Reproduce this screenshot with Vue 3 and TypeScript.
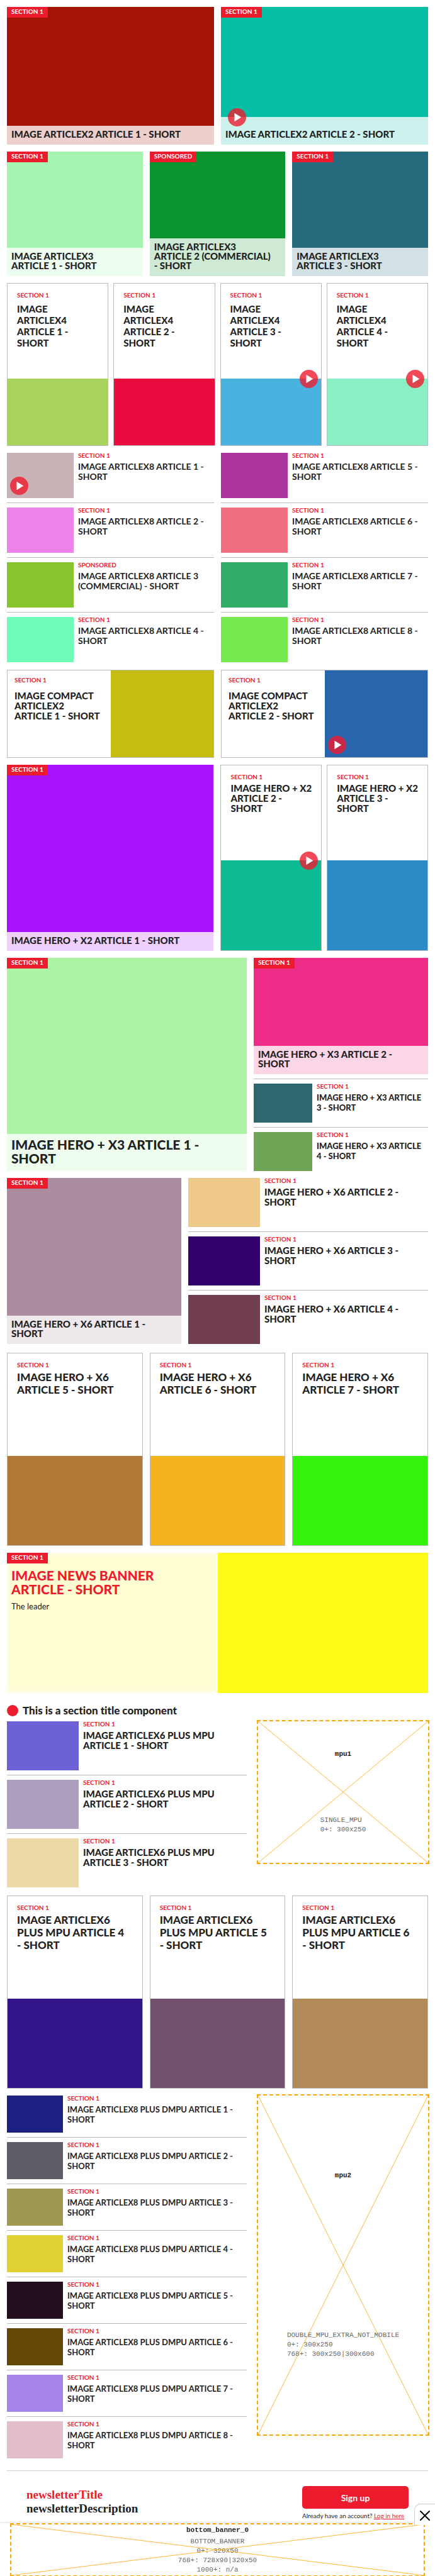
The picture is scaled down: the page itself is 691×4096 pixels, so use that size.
<script setup lang="ts">
interface Article {
  title: string
  color: string
  label?: string
  video?: boolean
}

interface AdSlot {
  kind: 'ad'
  name: string
  size: 'single' | 'double'
  lines: string[]
}

interface ArticleBlock {
  kind: 'overlay' | 'card' | 'compact' | 'banner'
  article: Article
}

interface ListBlock {
  kind: 'list'
  lead?: Article
  articles: Article[]
}

type Block = AdSlot | ArticleBlock | ListBlock

interface Section {
  name: string
  heading?: string
  blocks: Block[]
}

const art = (title: string, color: string, extra: Partial<Article> = {}): Article => ({
  title: `${title} - SHORT`,
  color,
  ...extra,
})

const numbered = (prefix: string, start: number, colors: string[]): Article[] =>
  colors.map((color, i) => art(`${prefix} ARTICLE ${start + i}`, color))

const as = (kind: ArticleBlock['kind'], articles: Article[]): ArticleBlock[] =>
  articles.map((article) => ({ kind, article }))

const sections: Section[] = [
  {
    name: 'x2',
    blocks: as('overlay', [
      art('IMAGE ARTICLEX2 ARTICLE 1', '#a41508'),
      art('IMAGE ARTICLEX2 ARTICLE 2', '#06bda5', { video: true }),
    ]),
  },
  {
    name: 'x3',
    blocks: as('overlay', [
      art('IMAGE ARTICLEX3 ARTICLE 1', '#a6f3b2'),
      art('IMAGE ARTICLEX3 ARTICLE 2 (COMMERCIAL)', '#0c942e', { label: 'SPONSORED' }),
      art('IMAGE ARTICLEX3 ARTICLE 3', '#276a7e'),
    ]),
  },
  {
    name: 'x4',
    blocks: as('card', [
      art('IMAGE ARTICLEX4 ARTICLE 1', '#a8d35d'),
      art('IMAGE ARTICLEX4 ARTICLE 2', '#ea0b3f'),
      art('IMAGE ARTICLEX4 ARTICLE 3', '#4ab2de', { video: true }),
      art('IMAGE ARTICLEX4 ARTICLE 4', '#8aefc4', { video: true }),
    ]),
  },
  {
    name: 'x8',
    blocks: [
      {
        kind: 'list',
        articles: [
          art('IMAGE ARTICLEX8 ARTICLE 1', '#c9b3b6', { video: true }),
          art('IMAGE ARTICLEX8 ARTICLE 2', '#ed82e9'),
          art('IMAGE ARTICLEX8 ARTICLE 3 (COMMERCIAL)', '#87c52f', { label: 'SPONSORED' }),
          art('IMAGE ARTICLEX8 ARTICLE 4', '#6ffeb9'),
        ],
      },
      {
        kind: 'list',
        articles: numbered('IMAGE ARTICLEX8', 5, ['#ac349c', '#f07080', '#32ad68', '#74ea4f']),
      },
    ],
  },
  {
    name: 'compact-x2',
    blocks: as('compact', [
      art('IMAGE COMPACT ARTICLEX2 ARTICLE 1', '#c7bd12'),
      art('IMAGE COMPACT ARTICLEX2 ARTICLE 2', '#2965ad', { video: true }),
    ]),
  },
  {
    name: 'hero-x2',
    blocks: [
      ...as('overlay', [art('IMAGE HERO + X2 ARTICLE 1', '#a813fb')]),
      ...as('card', [
        art('IMAGE HERO + X2 ARTICLE 2', '#0dbb95', { video: true }),
        art('IMAGE HERO + X2 ARTICLE 3', '#2c8bc5'),
      ]),
    ],
  },
  {
    name: 'hero-x3',
    blocks: [
      ...as('overlay', [art('IMAGE HERO + X3 ARTICLE 1', '#acf3a3')]),
      {
        kind: 'list',
        lead: art('IMAGE HERO + X3 ARTICLE 2', '#ee2d89'),
        articles: numbered('IMAGE HERO + X3', 3, ['#2e686f', '#6ea555']),
      },
    ],
  },
  {
    name: 'hero-x6',
    blocks: [
      ...as('overlay', [art('IMAGE HERO + X6 ARTICLE 1', '#ac8c9f')]),
      { kind: 'list', articles: numbered('IMAGE HERO + X6', 2, ['#eec887', '#31026b', '#713e51']) },
    ],
  },
  {
    name: 'cards-x3',
    blocks: as('card', numbered('IMAGE HERO + X6', 5, ['#b17838', '#f4b41f', '#34f209'])),
  },
  {
    name: 'news',
    blocks: [{ kind: 'banner', article: art('IMAGE NEWS BANNER ARTICLE', '#fdfa17') }],
  },
  {
    name: 'mpu',
    heading: 'This is a section title component',
    blocks: [
      {
        kind: 'list',
        articles: numbered('IMAGE ARTICLEX6 PLUS MPU', 1, ['#6d61d6', '#ad9fbf', '#edd9a5']),
      },
      { kind: 'ad', name: 'mpu1', size: 'single', lines: ['SINGLE_MPU', '0+: 300x250'] },
    ],
  },
  {
    name: 'cards-x3',
    blocks: as('card', numbered('IMAGE ARTICLEX6 PLUS MPU', 4, ['#31148a', '#715070', '#b28b58'])),
  },
  {
    name: 'dmpu',
    blocks: [
      {
        kind: 'list',
        articles: numbered('IMAGE ARTICLEX8 PLUS DMPU', 1, [
          '#1e2082', '#605d69', '#a09750', '#e0d234', '#220e1c', '#654803', '#a484e9', '#e3bfcd',
        ]),
      },
      {
        kind: 'ad',
        name: 'mpu2',
        size: 'double',
        lines: ['DOUBLE_MPU_EXTRA_NOT_MOBILE', '0+: 300x250', '768+: 300x250|300x600'],
      },
    ],
  },
]

const bottomBanner = ['BOTTOM_BANNER', '0+: 320x50', '768+: 728x90|320x50', '1000+: n/a']
</script>

<template>
  <div class="page">
    <svg class="sprite" aria-hidden="true">
      <symbol id="play" viewBox="0 0 32 32">
        <circle cx="16" cy="16" r="16" fill="#ed1b2e" fill-opacity="0.8" />
        <path d="M11.5 8.5 23.5 16 11.5 23.5z" fill="#fff" />
      </symbol>
    </svg>

    <main class="content">
      <template v-for="(section, s) in sections" :key="s">
        <h2 v-if="section.heading" class="section-title">
          <span class="dot"></span>{{ section.heading }}
        </h2>
        <section class="section" :class="section.name">
          <template v-for="(block, b) in section.blocks" :key="b">
            <article
              v-if="block.kind === 'overlay'"
              class="overlay"
              :style="{ backgroundColor: block.article.color }"
            >
              <span class="badge">{{ block.article.label ?? 'SECTION 1' }}</span>
              <div class="caption" :class="{ 'has-video': block.article.video }">
                <svg v-if="block.article.video" class="play"><use href="#play" /></svg>
                <h3 class="title"><a href="#">{{ block.article.title }}</a></h3>
              </div>
            </article>

            <article v-else-if="block.kind === 'card'" class="card">
              <div class="card-body">
                <span class="label">{{ block.article.label ?? 'SECTION 1' }}</span>
                <h3 class="title"><a href="#">{{ block.article.title }}</a></h3>
              </div>
              <div class="card-image" :style="{ backgroundColor: block.article.color }">
                <svg v-if="block.article.video" class="play"><use href="#play" /></svg>
              </div>
            </article>

            <article v-else-if="block.kind === 'compact'" class="compact">
              <div class="compact-body">
                <span class="label">{{ block.article.label ?? 'SECTION 1' }}</span>
                <h3 class="title"><a href="#">{{ block.article.title }}</a></h3>
              </div>
              <div class="compact-image" :style="{ backgroundColor: block.article.color }">
                <svg v-if="block.article.video" class="play"><use href="#play" /></svg>
              </div>
            </article>

            <article v-else-if="block.kind === 'banner'" class="banner">
              <div class="banner-body">
                <span class="badge">SECTION 1</span>
                <h3 class="title"><a href="#">{{ block.article.title }}</a></h3>
                <p class="leader">The leader</p>
              </div>
              <div class="banner-image" :style="{ backgroundColor: block.article.color }"></div>
            </article>

            <div v-else-if="block.kind === 'list'" class="list">
              <article
                v-if="block.lead"
                class="overlay lead"
                :style="{ backgroundColor: block.lead.color }"
              >
                <span class="badge">SECTION 1</span>
                <div class="caption">
                  <h3 class="title"><a href="#">{{ block.lead.title }}</a></h3>
                </div>
              </article>
              <article v-for="item in block.articles" :key="item.title" class="item">
                <div class="item-image" :style="{ backgroundColor: item.color }">
                  <svg v-if="item.video" class="play"><use href="#play" /></svg>
                </div>
                <div class="item-body">
                  <span class="label">{{ item.label ?? 'SECTION 1' }}</span>
                  <h3 class="title"><a href="#">{{ item.title }}</a></h3>
                </div>
              </article>
            </div>

            <aside v-else class="ad" :class="block.size">
              <svg class="cross" viewBox="0 0 100 100" preserveAspectRatio="none" aria-hidden="true">
                <path d="M0 0 100 100M100 0 0 100" />
              </svg>
              <strong class="ad-name">{{ block.name }}</strong>
              <div class="ad-lines">
                <div v-for="line in block.lines" :key="line">{{ line }}</div>
              </div>
            </aside>
          </template>
        </section>
      </template>

      <section class="newsletter">
        <div class="newsletter-text">
          <div class="newsletter-title">newsletterTitle</div>
          <div>newsletterDescription</div>
        </div>
        <div class="newsletter-action">
          <button type="button" class="signup">Sign up</button>
          <p class="login">Already have an account? <a href="#">Log in here</a></p>
        </div>
      </section>
    </main>

    <div class="sticky">
      <aside class="ad wide">
        <svg class="cross" viewBox="0 0 100 100" preserveAspectRatio="none" aria-hidden="true">
          <path d="M0 0 100 100M100 0 0 100" />
        </svg>
        <strong class="ad-name">bottom_banner_0</strong>
        <div class="ad-lines">
          <div v-for="line in bottomBanner" :key="line">{{ line }}</div>
        </div>
      </aside>
      <button type="button" class="close" aria-label="Close">
        <svg viewBox="0 0 18 18" aria-hidden="true"><path d="M2 2 16 16M16 2 2 16" /></svg>
      </button>
    </div>
  </div>
</template>

<style>
body {
  background: #fff;
}
</style>

<style scoped>
* {
  box-sizing: border-box;
}
.page {
  min-height: 100vh;
  font-family: Lato, "Open Sans", sans-serif;
  font-variant-ligatures: none;
  color: #222;
}
.sprite {
  position: absolute;
  width: 0;
  height: 0;
}
.content {
  padding: 11px 11px 90px;
}
.section {
  display: grid;
  gap: 11px;
  margin-bottom: 11px;
}
a {
  color: inherit;
  text-decoration: none;
}
.title {
  margin: 0;
  font-size: 15px;
  line-height: 16px;
  font-weight: 900;
}
.label {
  display: block;
  color: #ed1b2e;
  font-size: 10px;
  line-height: 14px;
  font-weight: 700;
}
.play {
  position: absolute;
  width: 29px;
  height: 29px;
}

/* image with a translucent caption */
.overlay {
  display: flex;
  flex-direction: column;
  justify-content: space-between;
  align-items: flex-start;
}
.badge {
  display: block;
  width: fit-content;
  padding: 0 7px 2px;
  background: #ed1b2e;
  color: #fff;
  font-size: 10px;
  line-height: 15px;
  font-weight: 700;
}
.caption {
  position: relative;
  width: 100%;
  padding: 6px 19px 9px 7px;
  background: rgba(255, 255, 255, 0.8);
}
.caption .title {
  line-height: 15px;
}
.caption.has-video {
  padding-top: 20px;
}
.caption .play {
  left: 11px;
  top: -14px;
}

/* bordered card, text above image */
.card {
  display: flex;
  flex-direction: column;
  border: 1px solid #bbb;
}
.card-body {
  height: 151px;
  padding: 11px 12px 0 15px;
}
.card-body .title {
  margin-top: 3px;
}
.card-image {
  position: relative;
  flex: 1;
}
.card-image .play {
  right: 5px;
  top: -14px;
}

/* bordered card, text beside image */
.compact {
  display: grid;
  grid-template-columns: 1fr 1fr;
  border: 1px solid #bbb;
}
.compact-body {
  padding: 8px 13px 0 11px;
}
.compact-body .title {
  margin-top: 10px;
}
.compact-image {
  position: relative;
}
.compact-image .play,
.item-image .play {
  left: 5px;
  bottom: 5px;
}

/* thumbnail rows */
.list {
  display: flex;
  flex-direction: column;
}
.item {
  display: flex;
  gap: 7px;
}
.item + .item,
.lead + .item {
  margin-top: 7px;
  padding-top: 7px;
  border-top: 1px solid #bbb;
}
.item-image {
  position: relative;
  flex: none;
}
.item-body .label {
  line-height: 8px;
}
.item-body .title {
  margin-top: 6px;
}
.lead {
  flex: 1;
}

.x2 {
  grid-template-columns: 1fr 1fr;
  min-height: 219px;
}
.x3 {
  grid-template-columns: repeat(3, 1fr);
  min-height: 198px;
}
.x4 {
  grid-template-columns: repeat(4, 1fr);
  gap: 8px;
  min-height: 259px;
}
.x4 .card-body {
  padding-right: 15px;
}
.x4 .title {
  margin-top: 6px;
  line-height: 18px;
}
.x8 {
  grid-template-columns: 1fr 1fr;
  margin-bottom: 12px;
}
.x8 .title {
  font-size: 14px;
  font-weight: 700;
}
.x8 .item-image {
  width: 106px;
  height: 72px;
}
.compact-x2 {
  grid-template-columns: 1fr 1fr;
  min-height: 140px;
}
.hero-x2 {
  grid-template-columns: 332fr 161fr 161fr;
  gap: 8px;
  min-height: 296px;
}
.hero-x2 .overlay {
  margin-right: 3px;
}
.hero-x3 {
  grid-template-columns: 381fr 277fr;
  min-height: 339px;
}
.hero-x3 > .overlay .title {
  font-size: 21px;
  line-height: 22px;
}
.hero-x3 .item-image {
  width: 93px;
  height: 62px;
}
.hero-x3 .item-body {
  padding-right: 3px;
}
.hero-x3 .item .title {
  font-size: 13px;
}
.hero-x6 {
  grid-template-columns: 277fr 381fr;
  margin-bottom: 14px;
}
.hero-x6 .item-image,
.mpu .item-image {
  width: 114px;
  height: 78px;
}
.cards-x3 {
  grid-template-columns: repeat(3, 1fr);
  min-height: 307px;
}
.cards-x3 .card-body {
  height: 163px;
  padding-right: 22px;
}
.cards-x3 .title {
  font-size: 17px;
  line-height: 20px;
}

.banner {
  display: grid;
  grid-template-columns: 1fr 1fr;
  min-height: 223px;
}
.banner-body {
  background: #fffdd2;
  box-shadow: inset 0 0 8px #fff;
}
.banner .title {
  margin-top: 8px;
  padding: 0 40px 0 7px;
  color: #ed1b2e;
  font-size: 21px;
  line-height: 22px;
}
.leader {
  margin: 7px 7px 0;
  font-size: 13px;
  line-height: 18px;
}

.section-title {
  display: flex;
  align-items: center;
  gap: 7px;
  margin: 16px 0 5px;
  font-size: 17px;
  line-height: 24px;
  font-weight: 900;
}
.dot {
  width: 18px;
  height: 18px;
  border-radius: 50%;
  background: #ed1b2e;
}

.mpu,
.dmpu {
  grid-template-columns: 381fr 277fr;
}
.mpu {
  margin-bottom: 13px;
}
.dmpu .title {
  font-size: 13px;
  font-weight: 700;
}
.dmpu .item-image {
  width: 89px;
  height: 59px;
}
.dmpu {
  margin-bottom: 19px;
}

/* ad placeholders */
.ad {
  position: relative;
  display: flex;
  flex-direction: column;
  justify-content: space-around;
  align-items: center;
  justify-self: end;
  width: 274px;
  margin: -2px -2px 0 0;
  border: 2px dashed #ffa500;
  font-family: "Liberation Mono", monospace;
  font-size: 11px;
  line-height: 15px;
}
.ad.single {
  height: 229px;
}
.ad.double {
  height: 543px;
}
.cross {
  position: absolute;
  inset: 0;
  width: 100%;
  height: 100%;
}
.cross path {
  stroke: #ffa500;
  stroke-width: 1px;
  stroke-opacity: 0.8;
  fill: none;
  vector-effect: non-scaling-stroke;
}
.ad-lines {
  color: #666;
}

.newsletter {
  display: flex;
  justify-content: space-between;
  padding: 24px 31px 0;
  border-top: 1px solid #d0d0d0;
}
.newsletter-text {
  padding-top: 3px;
  font-family: "Liberation Serif", serif;
  font-size: 19px;
  line-height: 22px;
  font-weight: 700;
}
.newsletter-title {
  color: #ed1b2e;
}
.newsletter-action {
  display: flex;
  flex-direction: column;
  min-width: 169px;
}
.signup {
  height: 36px;
  border: 0;
  border-radius: 5px;
  background: #ed1b2e;
  color: #fff;
  font: 700 14px/36px Lato, sans-serif;
  cursor: pointer;
}
.login {
  margin: 2px 0 0;
  font-size: 10px;
  line-height: 18px;
}
.login a {
  color: #ed1b2e;
  text-decoration: underline;
}

.sticky {
  position: fixed;
  left: 0;
  right: 0;
  bottom: 0;
  height: 84px;
  padding: 0 16px;
  background: #fff;
  box-shadow: 0 0 4px rgba(0, 0, 0, 0.2);
}
.ad.wide {
  width: 100%;
  height: 85px;
  margin: 0;
  text-align: center;
}
.close {
  position: absolute;
  top: -31px;
  right: 0;
  display: flex;
  align-items: center;
  justify-content: center;
  width: 33px;
  height: 34px;
  padding: 3px 0 0;
  border: 1px solid #ccc;
  border-width: 1px 0 0 1px;
  border-radius: 10px 0 0 0;
  background: #fff;
  cursor: pointer;
}
.close svg {
  width: 18px;
  height: 18px;
}
.close path {
  stroke: #000;
  stroke-width: 2;
  stroke-linecap: round;
}
</style>
